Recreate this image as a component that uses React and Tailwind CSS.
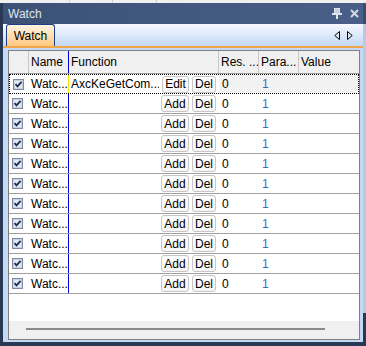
import React from "react";

const font = { fontFamily: '"Liberation Sans", Arial, sans-serif' };

function CheckBox() {
  return (
    <svg width="11" height="11" viewBox="0 0 11 11" className="block">
      <rect x="0.5" y="0.5" width="10" height="10" fill="#e4e9f0" stroke="#7d8ca3" />
      <rect x="1.5" y="1.5" width="8" height="8" fill="none" stroke="#c9d2de" />
      <path d="M2.5 5.2 L4.5 7.4 L8.6 2.8" fill="none" stroke="#1d2d5c" strokeWidth="1.8" />
    </svg>
  );
}

function Btn({ label, w }) {
  return (
    <div
      className={`${w} h-[17px] flex items-center justify-center rounded-[3px] border border-[#c6c6c6] bg-gradient-to-b from-[#ffffff] to-[#f4f4f4] text-[12px] text-black leading-none`}
    >
      {label}
    </div>
  );
}

function Row({ first }) {
  return (
    <div
      className={`flex h-[20px] text-[12px] leading-none whitespace-nowrap ${
        first ? "border border-dotted border-black" : "border-b border-[#a0a0a0]"
      }`}
    >
      <div className={`${first ? "w-[19px]" : "w-[20px]"} flex items-center pl-[3px]`}>
        <CheckBox />
      </div>
      <div
        className={`w-[40px] flex items-center pl-[2px] border-r ${
          first ? "border-[#f2e200]" : "border-[#0000d0]"
        } text-black`}
      >
        Watc...
      </div>
      <div className="w-[150px] flex items-center pl-[2px] pr-[3px] gap-[3px]">
        <div className="flex-1 text-black overflow-hidden">
          {first ? "AxcKeGetCom..." : ""}
        </div>
        {first ? <Btn label="Edit" w="w-[27px]" /> : <Btn label="Add" w="w-[28px]" />}
        <Btn label="Del" w="w-[24px]" />
      </div>
      <div className={`w-[40px] flex items-center pl-[3px] text-black ${first ? "bg-[#f2f2f2]" : ""}`}>0</div>
      <div className={`w-[40px] flex items-center pl-[3px] text-[#2e6fc8] ${first ? "bg-[#f2f2f2]" : ""}`}>1</div>
      <div className={`flex-1 ${first ? "bg-[#f2f2f2]" : ""}`} />
    </div>
  );
}

export default function App() {
  const rows = Array.from({ length: 11 }, (_, i) => i);
  return (
    <div className="w-[366px] h-[346px] bg-[#293955] overflow-hidden flex flex-col" style={font}>
      {/* strip of the window behind */}
      <div className="h-[3px] flex bg-[#f0f0f0]">
        <div className="w-[70px] border-r border-[#cfcfcf]" />
        <div className="w-[43px] border-r border-[#cfcfcf]" />
        <div className="w-[44px] border-r border-[#cfcfcf]" />
      </div>

      <div className="flex flex-1">
        <div className="w-[3px] bg-[#293955]" />

        {/* panel */}
        <div className="w-[360px] h-[339px] flex flex-col">
          <div className="h-[21px] bg-gradient-to-r from-[#3c5176] to-[#4a5f87] flex items-center pl-[5px] pr-[4px]">
            <span className="text-[12px] text-[#dfe7f3] leading-none">Watch</span>
            <div className="ml-auto flex items-center gap-[8px]">
              <svg width="10" height="11" viewBox="0 0 10 11">
                <rect x="2.5" y="0.5" width="5" height="5" fill="#c9d0db" stroke="#dfe4ec" />
                <rect x="0" y="5" width="10" height="2" fill="#dfe4ec" />
                <rect x="4" y="7" width="2" height="4" fill="#dfe4ec" />
              </svg>
              <svg width="9" height="9" viewBox="0 0 9 9">
                <path d="M1 1 L8 8 M8 1 L1 8" stroke="#d4dae4" strokeWidth="2" />
              </svg>
            </div>
          </div>

          <div className="h-[22px] bg-gradient-to-b from-[#f7faff] to-[#c3d7f5] flex items-end pl-[3px] pr-[10px]">
            <div className="w-[49px] h-[22px] border border-b-0 border-[#1f3d86] rounded-t-[3px] bg-gradient-to-b from-[#fff5e2] to-[#ffc77c] flex items-center justify-center">
              <span className="text-[12px] text-black leading-none">Watch</span>
            </div>
            <div className="ml-auto self-center flex items-center gap-[7px]">
              <svg width="6" height="9" viewBox="0 0 6 9">
                <path d="M5.5 0.5 L0.8 4.5 L5.5 8.5 Z" fill="none" stroke="#000" />
              </svg>
              <svg width="6" height="9" viewBox="0 0 6 9">
                <path d="M0.5 0.5 L5.2 4.5 L0.5 8.5 Z" fill="none" stroke="#000" />
              </svg>
            </div>
          </div>

          <div className="h-[2px] bg-[#f2a64a]" />

          <div className="flex-1 bg-[#c4d9f6] pt-[2px] pl-[5px] pr-[3px] pb-[2px]">
            <div className="w-[352px] h-[290px] border border-[#7f7f7f] bg-white flex flex-col">
              {/* header */}
              <div className="h-[23px] flex bg-[#f0f0f0] border-b border-[#a0a0a0] text-[12px] text-black leading-none whitespace-nowrap">
                <div className="w-[20px] border-r border-[#c8c8c8]" />
                <div className="w-[40px] border-r border-[#0000d0] flex items-center pl-[2px]">Name</div>
                <div className="w-[150px] border-r border-[#c8c8c8] flex items-center pl-[2px]">Function</div>
                <div className="w-[40px] border-r border-[#c8c8c8] flex items-center pl-[2px] overflow-hidden">Res. ...</div>
                <div className="w-[40px] border-r border-[#c8c8c8] flex items-center pl-[2px] overflow-hidden">Para...</div>
                <div className="flex-1 flex items-center pl-[2px]">Value</div>
              </div>

              {rows.map((i) => (
                <Row key={i} first={i === 0} />
              ))}

              <div className="flex-1 flex">
                <div className="w-[20px]" />
                <div className="w-[40px]" />
              </div>

              <div className="h-[18px] bg-[#f0f0f0] pl-[17px] pt-[7px]">
                <div className="w-[299px] h-[2px] bg-[#8a8a8a]" />
              </div>
            </div>
          </div>
        </div>

        {/* right edge */}
        <div className="w-[3px] flex flex-col">
          <div className="h-[21px] bg-[#3b4d6e]" />
          <div className="h-[289px] bg-[#b9c9df]" />
          <div className="flex-1 bg-[#293955]" />
        </div>
      </div>
    </div>
  );
}
